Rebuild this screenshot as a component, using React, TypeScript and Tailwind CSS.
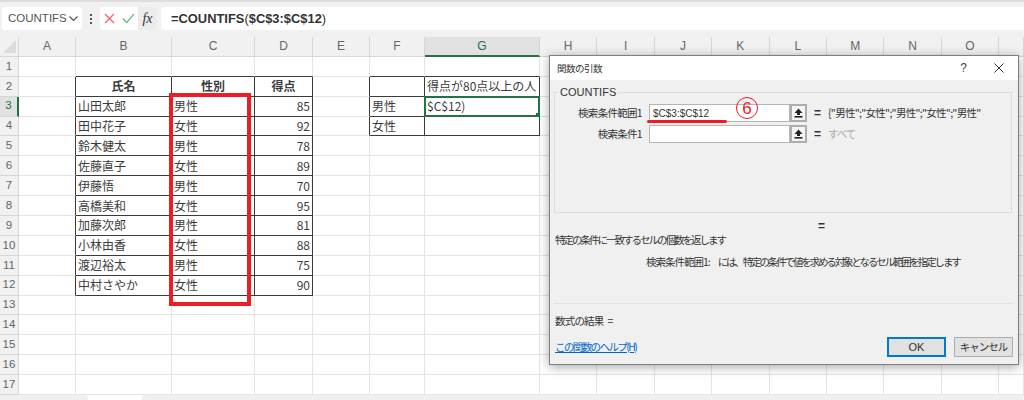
import React from "react";

const cols = ["A","B","C","D","E","F","G","H","I","J","K","L","M","N","O",""];
const names = ["山田太郎","田中花子","鈴木健太","佐藤直子","伊藤悟","高橋美和","加藤次郎","小林由香","渡辺裕太","中村さやか"];
const scores = ["85","92","78","89","70","95","81","88","75","90"];
const rows = Array.from({ length: 17 }, (_, i) => i + 1);

function inTable(r: number, c: number) {
  if (r >= 2 && r <= 12 && c >= 1 && c <= 3) return true;
  if (r >= 2 && r <= 4 && c >= 5 && c <= 6) return true;
  return false;
}

function content(r: number, c: number): { t: string; cls?: string } | null {
  if (r === 2 && c === 1) return { t: "氏名", cls: "justify-center font-bold" };
  if (r === 2 && c === 2) return { t: "性別", cls: "justify-center font-bold" };
  if (r === 2 && c === 3) return { t: "得点", cls: "justify-center font-bold" };
  if (r >= 3 && r <= 12 && c === 1) return { t: names[r - 3] };
  if (r >= 3 && r <= 12 && c === 2) return { t: r % 2 === 1 ? "男性" : "女性" };
  if (r >= 3 && r <= 12 && c === 3) return { t: scores[r - 3], cls: "justify-end" };
  if (r === 2 && c === 6) return { t: "得点が80点以上の人" };
  if (r === 3 && c === 5) return { t: "男性" };
  if (r === 4 && c === 5) return { t: "女性" };
  return null;
}

function Cell({ r, c }: { r: number; c: number }) {
  const right = inTable(r, c) || inTable(r, c + 1);
  const bottom = inTable(r, c) || inTable(r + 1, c);
  const data = content(r, c);
  const active = r === 3 && c === 6;
  return (
    <div
      className={`relative flex items-center px-[2px] whitespace-nowrap border-r border-b text-[12px] leading-none text-[#3c3c3c] ${
        right ? "border-r-[#3a3a3a]" : "border-r-[#e4e4e4]"
      } ${bottom ? "border-b-[#3a3a3a]" : "border-b-[#e4e4e4]"} ${data?.cls ?? ""}`}
    >
      {data?.t}
      {active && (
        <div className="absolute -left-px -top-px -right-px -bottom-px flex items-center border-2 border-[#217346] px-[1px] text-[12px]">
          $C$12)
          <span className="absolute -bottom-[2px] -right-[2px] h-[4px] w-[4px] bg-[#217346]" />
        </div>
      )}
    </div>
  );
}

function RefBtn() {
  return (
    <div className="flex h-[18px] w-[17px] items-center justify-center border-2 border-[#adadad] bg-[#f4f4f4]">
      <svg width="9" height="10" viewBox="0 0 9 10">
        <path d="M4.5 0.5 L8.5 5 H6 V7 H3 V5 H0.5 Z" fill="#222" />
        <rect x="0.5" y="8" width="8" height="1.6" fill="#222" />
      </svg>
    </div>
  );
}

export default function App() {
  return (
    <div className="relative flex h-[400px] w-[1024px] flex-col overflow-hidden bg-white font-['Noto_Sans_CJK_JP','Noto_Sans',sans-serif]">
      {/* formula bar */}
      <div className="flex h-[37px] items-start gap-[4px] border-t-2 border-[#dedede] bg-[#f1f1f1] pl-[2px] pt-[5px]">
        <div className="flex h-[23px] w-[80px] items-center justify-between rounded-[3px] bg-white pl-[6px] pr-[3px] font-['Liberation_Sans',sans-serif] text-[11.5px] text-[#555]">
          COUNTIFS
          <svg width="11" height="7" viewBox="0 0 11 7">
            <path d="M1.5 1.5 L5.5 5.5 L9.5 1.5" fill="none" stroke="#555" strokeWidth="1.2" />
          </svg>
        </div>
        <div className="flex h-[23px] w-[10px] flex-col items-center justify-center gap-[2px]">
          <span className="h-[2px] w-[2px] bg-[#555]" />
          <span className="h-[2px] w-[2px] bg-[#555]" />
          <span className="h-[2px] w-[2px] bg-[#555]" />
        </div>
        <div className="flex h-[23px] w-[57px] items-center overflow-hidden rounded-[3px] bg-white">
          <div className="flex w-[19px] justify-center">
            <svg width="11" height="11" viewBox="0 0 11 11">
              <path d="M1 1 L10 10 M10 1 L1 10" stroke="#e8686b" strokeWidth="1.3" fill="none" />
            </svg>
          </div>
          <div className="flex w-[19px] justify-center">
            <svg width="13" height="11" viewBox="0 0 13 11">
              <path d="M1 5.5 L4.8 9.5 L12 1" stroke="#6fbb83" strokeWidth="1.3" fill="none" />
            </svg>
          </div>
          <div className="flex h-full w-[19px] items-center justify-center bg-[#ececec] font-['Liberation_Serif',serif] text-[14px] italic text-[#333]">
            fx
          </div>
        </div>
        <div className="flex h-[23px] flex-1 items-center rounded-l-[3px] bg-white pl-[10px] font-['Liberation_Sans',sans-serif] text-[12.9px] font-bold text-[#333]">
          =COUNTIFS<span className="font-normal">(</span>$C$3:$C$12<span className="font-normal">)</span>
        </div>
      </div>

      {/* sheet */}
      <div className="grid grid-cols-[19px_57px_96px_83px_58px_57px_55px_115px_repeat(8,57.4px)_25px] grid-rows-[20px_repeat(17,19.9px)]">
        <div className="flex items-center justify-end border-r border-b border-[#d6d6d6] bg-[#f1f1f1] pr-[2px]">
          <svg width="13" height="13" viewBox="0 0 13 13">
            <path d="M13 0 V13 H0 Z" fill="#dcdcdc" />
          </svg>
        </div>
        {cols.map((h, i) => (
          <div
            key={i}
            className={`flex items-center justify-center border-r font-['Liberation_Sans',sans-serif] text-[12px] ${
              h === "G"
                ? "border-b-2 border-r-[#d6d6d6] border-b-[#217346] bg-[#e1e1e1] text-[#217346]"
                : "border-b border-[#d6d6d6] bg-[#f1f1f1] text-[#666]"
            }`}
          >
            {h}
          </div>
        ))}
        {rows.map((r) => (
          <React.Fragment key={r}>
            <div
              className={`flex items-center justify-center border-b border-b-[#d6d6d6] font-['Liberation_Sans',sans-serif] text-[11.5px] ${
                r === 3
                  ? "border-r-2 border-r-[#217346] bg-[#e1e1e1] text-[#217346]"
                  : "border-r border-r-[#d6d6d6] bg-[#f1f1f1] text-[#666]"
              }`}
            >
              {r}
            </div>
            {cols.map((_, c) => (
              <Cell key={c} r={r} c={c} />
            ))}
          </React.Fragment>
        ))}
      </div>

      {/* sheet tabs strip */}
      <div className="flex h-[5px] flex-1 items-end bg-white">
        <div className="h-[5px] w-[88px] rounded-tr-[3px] bg-[#f0f0f0]" />
        <div className="h-[5px] w-[54px]" />
        <div className="h-[5px] flex-1 rounded-tl-[3px] bg-[#f0f0f0]" />
      </div>

      {/* red annotation around the column */}
      <div className="absolute left-[169px] top-[93px] h-[213px] w-[82px] border-4 border-[#ee1c25]" />

      {/* function arguments dialog */}
      <div className="absolute left-[549px] top-[55px] flex h-[310px] w-[470px] flex-col border border-[#7f7f7f] bg-[#f0f0f0] text-[10.5px] text-[#333] shadow-[0_2px_10px_rgba(0,0,0,0.35)]">
        <div className="flex h-[24px] shrink-0 items-center justify-between bg-white pl-[7px] pr-[14px]">
          <span className="text-[9.5px] tracking-[-0.5px]">関数の引数</span>
          <div className="flex items-center gap-[27px]">
            <span className="font-['Liberation_Sans',sans-serif] text-[12px] text-[#444]">?</span>
            <svg width="10" height="10" viewBox="0 0 10 10">
              <path d="M0.5 0.5 L9.5 9.5 M9.5 0.5 L0.5 9.5" stroke="#333" strokeWidth="1" fill="none" />
            </svg>
          </div>
        </div>

        <div className="flex flex-1 flex-col px-[4px]">
          <fieldset className="mt-[6px] h-[127px] w-[458px] border border-[#dcdcdc]">
            <legend className="ml-[3px] px-[2px] font-['Liberation_Sans',sans-serif] text-[11px] leading-[12px]">COUNTIFS</legend>
            <div className="mt-[6px] flex flex-col gap-[3px]">
              <div className="flex h-[18px] items-center">
                <span className="w-[94px] pr-[7px] text-right tracking-[-0.7px] whitespace-nowrap">検索条件範囲1</span>
                <div className="relative flex h-[18px] w-[141px] items-center border border-[#b4b4b4] bg-white pl-[3px] font-['Liberation_Sans',sans-serif] text-[10px]">
                  $C$3:$C$12
                  <span className="absolute -left-[3px] top-[15px] h-[3px] w-[80px] rounded-full bg-[#ee1c25]" />
                  <span className="absolute left-[86px] -top-[8px] flex h-[22px] w-[22px] items-center justify-center rounded-full border border-[#ee1c25] text-[17px] leading-none text-[#ee1c25]">6</span>
                </div>
                <RefBtn />
                <span className="ml-[7px] font-['Liberation_Sans',sans-serif] text-[12px] font-bold">=</span>
                <span className="ml-[7px] whitespace-nowrap tracking-[-0.7px]">{'{"男性";"女性";"男性";"女性";"男性"'}</span>
              </div>
              <div className="flex h-[18px] items-center">
                <span className="w-[94px] pr-[7px] text-right tracking-[-0.7px] whitespace-nowrap">検索条件1</span>
                <div className="h-[18px] w-[141px] border border-[#b4b4b4] bg-white" />
                <RefBtn />
                <span className="ml-[7px] font-['Liberation_Sans',sans-serif] text-[12px] font-bold">=</span>
                <span className="ml-[7px] text-[#aaa] tracking-[-1px]">すべて</span>
              </div>
            </div>
          </fieldset>

          <div className="mt-[6px] h-[14px] pl-[264px] font-['Liberation_Sans',sans-serif] text-[12px] font-bold leading-[14px]">=</div>
          <div className="h-[14px] whitespace-nowrap pl-[1px] leading-[14px] tracking-[-2px]">特定の条件に一致するセルの個数を返します</div>
          <div className="mt-[8px] flex h-[14px] items-center whitespace-nowrap leading-[14px]">
            <span className="ml-[92px] tracking-[-1px]">検索条件範囲1:</span>
            <span className="ml-[8px] tracking-[-2.15px]">には、特定の条件で値を求める対象となるセル範囲を指定します</span>
          </div>

          <div className="mt-[34px] h-px w-[459px] bg-[#e2e2e2]" />
          <div className="mt-[10px] h-[14px] pl-[1px] leading-[14px] tracking-[-0.8px]">数式の結果<span className="ml-[4px]">=</span></div>

          <div className="mt-[9px] flex items-center justify-between pl-[1px] pr-[1px]">
            <a className="text-[#0066cc] underline tracking-[-1.6px]">この関数のヘルプ(H)</a>
            <div className="flex gap-[8px]">
              <div className="flex h-[20px] w-[59px] items-center justify-center border-2 border-[#0078d7] bg-[#e1e1e1] font-['Liberation_Sans',sans-serif] text-[11px]">
                OK
              </div>
              <div className="flex h-[20px] w-[59px] items-center justify-center border border-[#adadad] bg-[#e1e1e1] tracking-[-1px]">
                キャンセル
              </div>
            </div>
          </div>
        </div>
      </div>
    </div>
  );
}
